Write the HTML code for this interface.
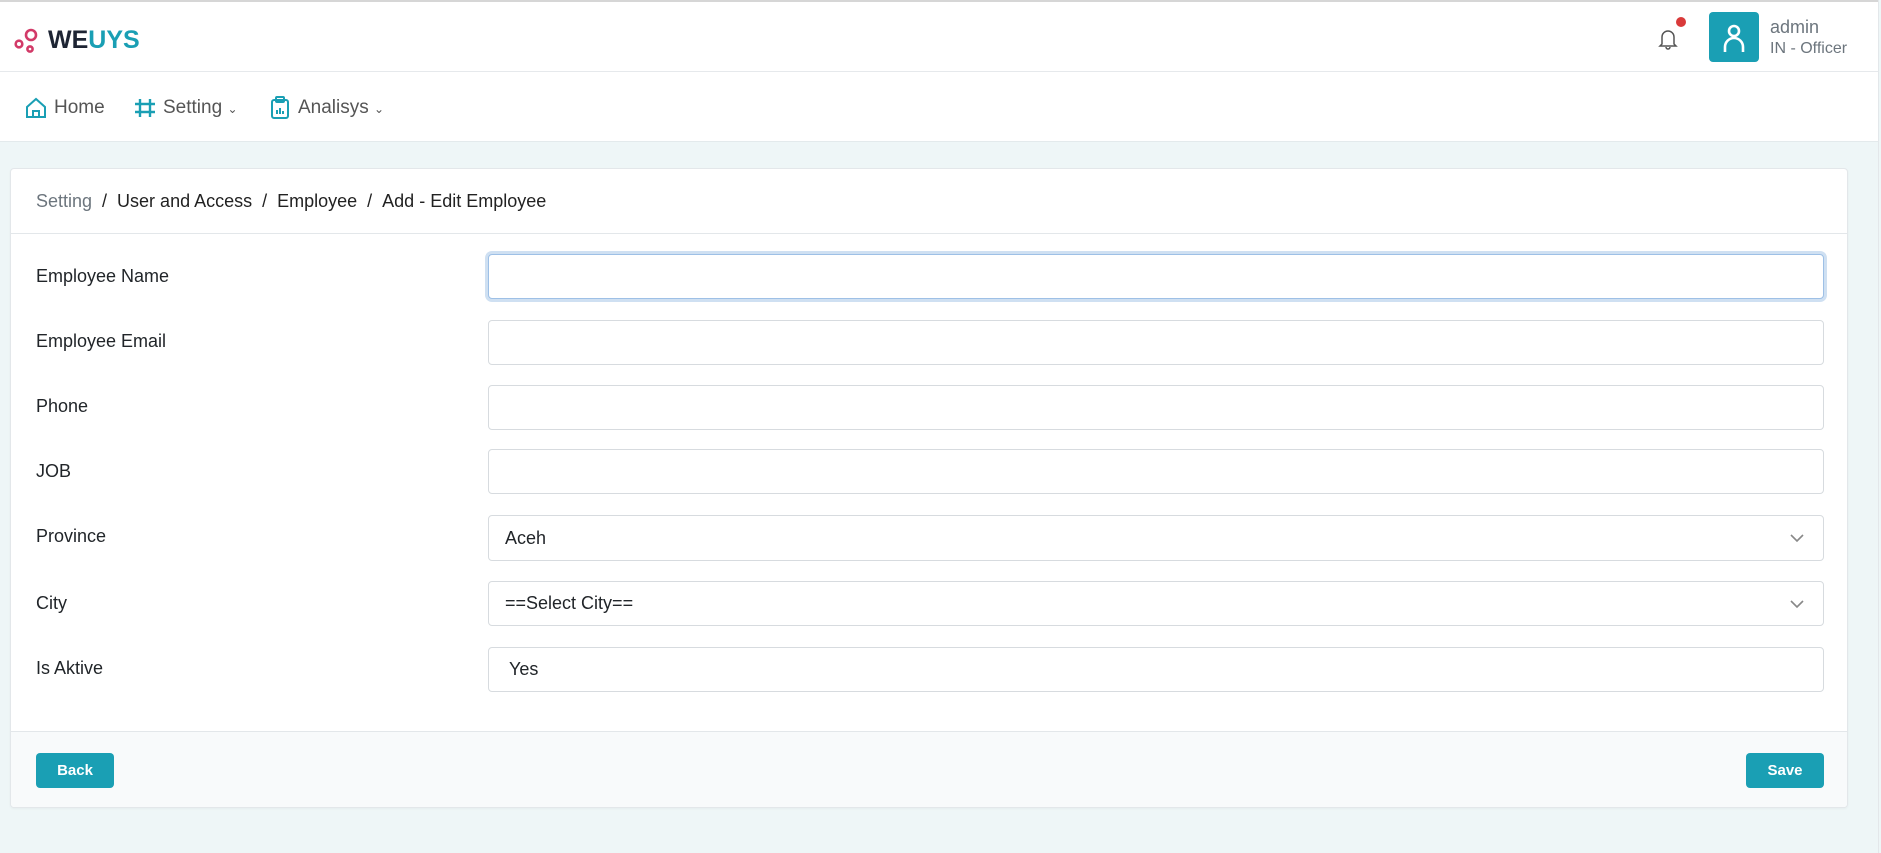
<!DOCTYPE html>
<html><head><meta charset="utf-8"><style>
*{box-sizing:border-box;margin:0;padding:0}
body{width:1881px;height:853px;overflow:hidden;background:#eef6f7;font-family:"Liberation Sans",sans-serif;color:#212529;position:relative}
.top{position:absolute;left:0;top:0;width:1878px;height:72px;background:#fff;border-top:2px solid #d6d6d6;border-bottom:1px solid #e6e9ec}
.nav{position:absolute;left:0;top:72px;width:1878px;height:70px;background:#fff;border-bottom:1px solid #e3eaec}
.abs{position:absolute}
.card{position:absolute;left:10px;top:168px;width:1838px;height:640px;background:#fff;border:1px solid #e3e7ea;border-radius:4px;box-shadow:0 1px 2px rgba(0,0,0,.04);overflow:hidden}
.lbl{position:absolute;left:25px;font-size:18px;color:#212529}
.inp{position:absolute;left:477px;width:1336px;height:45px;border:1px solid #d7dbdf;border-radius:4px;background:#fff;font-size:18px;padding-left:16px;line-height:43px}
.btn{position:absolute;top:584px;height:35px;background:#1a9fb4;color:#fff;border-radius:4px;font-size:15px;font-weight:bold;text-align:center;line-height:35px}
.chev{position:absolute;right:18px;top:14px}
</style></head><body>
<div class="top">
  <svg class="abs" style="left:13px;top:25px" width="28" height="28" viewBox="0 0 28 28" fill="none" stroke="#d23a68" stroke-width="2.6">
    <circle cx="18" cy="8" r="5"/><circle cx="6" cy="17" r="3.3"/><circle cx="17" cy="22" r="2.6"/></svg>
  <div class="abs" style="left:48px;top:24px;font-size:25px;font-weight:bold;letter-spacing:0px"><span style="color:#1d2433">WE</span><span style="color:#1a9fb4">UYS</span></div>
  <svg class="abs" style="left:1658px;top:26px" width="20" height="22" viewBox="0 0 20 22" fill="none" stroke="#555" stroke-width="1.5"><path d="M4 16V9a6 6 0 0112 0v7l2 2H2z"/><path d="M8 19a2 2 0 004 0"/></svg>
  <div class="abs" style="left:1676px;top:15px;width:10px;height:10px;border-radius:50%;background:#d93a3a"></div>
  <div class="abs" style="left:1709px;top:10px;width:50px;height:50px;border-radius:4px;background:#1a9fb4"></div>
  <svg class="abs" style="left:1721px;top:20px" width="26" height="32" viewBox="0 0 26 32" fill="none" stroke="#fff" stroke-width="2.6"><circle cx="13" cy="9" r="5"/><path d="M4 30v-5a9 9 0 0118 0v5"/></svg>
  <div class="abs" style="left:1770px;top:15px;font-size:18px;color:#6c757d">admin</div>
  <div class="abs" style="left:1770px;top:38px;font-size:16px;color:#6c757d">IN - Officer</div>
</div>
<div class="nav">
  <svg class="abs" style="left:25px;top:25px" width="22" height="22" viewBox="0 0 22 22" fill="none" stroke="#1a9fb4" stroke-width="2"><path d="M2 10L11 2l9 8v10H2z"/><path d="M8 20v-6h6v6"/></svg>
  <div class="abs" style="left:54px;top:25px;font-size:19px;color:#555">Home</div>
  <svg class="abs" style="left:134px;top:26px" width="22" height="20" viewBox="0 0 22 20" fill="none" stroke="#1a9fb4" stroke-width="2.4"><path d="M6 1v18M16 1v18M1 6h20M1 14h20"/></svg>
  <div class="abs" style="left:163px;top:25px;font-size:19px;color:#555">Setting <span style="font-size:12px">&#8964;</span></div>
  <svg class="abs" style="left:270px;top:24px" width="20" height="24" viewBox="0 0 20 24" fill="none" stroke="#1a9fb4" stroke-width="2"><rect x="2" y="4" width="16" height="18" rx="2"/><rect x="6" y="1" width="8" height="5" rx="1"/><path d="M7 18v-4M10 18v-6M13 18v-3"/></svg>
  <div class="abs" style="left:298px;top:25px;font-size:19px;color:#555">Analisys <span style="font-size:12px">&#8964;</span></div>
</div>
<div class="card">
  <div class="abs" style="left:25px;top:22px;font-size:18px;color:#222"><span style="color:#6c757d">Setting</span>&nbsp; / &nbsp;User and Access&nbsp; / &nbsp;Employee&nbsp; / &nbsp;Add - Edit Employee</div>
  <div class="abs" style="left:0;top:64px;width:100%;height:1px;background:#e3e7ea"></div>
  <div class="lbl" style="top:97px">Employee Name</div>
  <div class="inp" style="top:85px;border-color:#9ec0e6;box-shadow:0 0 0 3px #cfe0f2"></div>
  <div class="lbl" style="top:162px">Employee Email</div>
  <div class="inp" style="top:151px"></div>
  <div class="lbl" style="top:227px">Phone</div>
  <div class="inp" style="top:216px"></div>
  <div class="lbl" style="top:292px">JOB</div>
  <div class="inp" style="top:280px"></div>
  <div class="lbl" style="top:357px">Province</div>
  <div class="inp" style="top:346px;height:46px;line-height:44px">Aceh<svg class="chev" width="16" height="16" viewBox="0 0 16 16" fill="none" stroke="#888" stroke-width="1.6"><path d="M2 5l6 6 6-6"/></svg></div>
  <div class="lbl" style="top:424px">City</div>
  <div class="inp" style="top:412px">==Select City==<svg class="chev" width="16" height="16" viewBox="0 0 16 16" fill="none" stroke="#888" stroke-width="1.6"><path d="M2 5l6 6 6-6"/></svg></div>
  <div class="lbl" style="top:489px">Is Aktive</div>
  <div class="inp" style="top:478px;padding-left:20px">Yes</div>
  <div class="abs" style="left:0;top:562px;width:100%;height:78px;background:#f8fafb;border-top:1px solid #e3e7ea"></div>
  <div class="btn" style="left:25px;width:78px">Back</div>
  <div class="btn" style="left:1735px;width:78px">Save</div>
</div>
<div class="abs" style="left:1878px;top:0;width:3px;height:853px;background:#eef6f7;border-left:1px solid #e3e7ea"></div>
</body></html>
